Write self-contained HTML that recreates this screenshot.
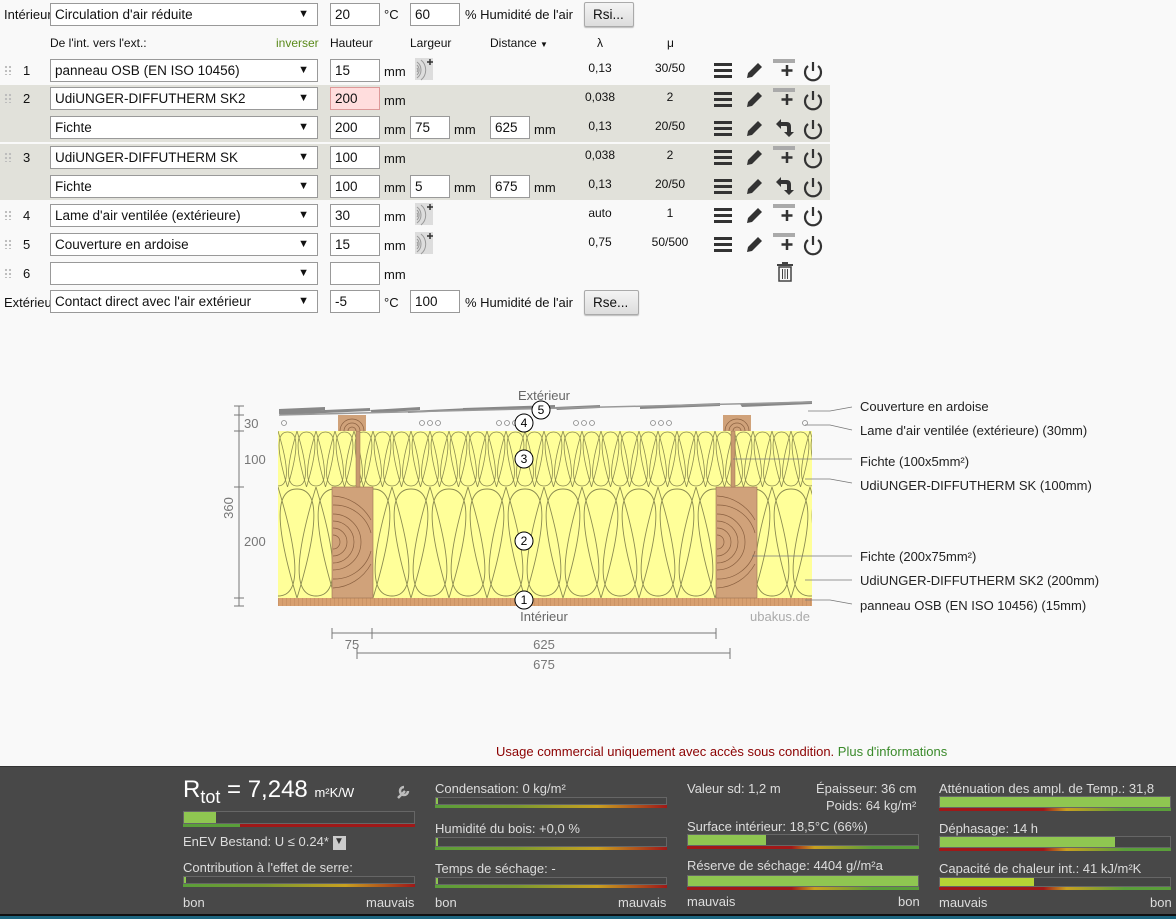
<!DOCTYPE html>
<html><head><meta charset="utf-8">
<style>
*{box-sizing:border-box;margin:0;padding:0}
body{width:1176px;height:919px;background:#f9f9f9;font-family:"Liberation Sans",Arial,sans-serif;font-size:13px;color:#111;position:relative;overflow:hidden}
.a{position:absolute;white-space:nowrap}
.sel{position:absolute;left:50px;width:268px;height:23px;border:1px solid #999;background:#fff;padding:3px 4px;font-size:13.5px}
.sel:after{content:"▼";position:absolute;right:8px;top:4px;font-size:11px}
.in{position:absolute;height:23px;border:1px solid #999;background:#fff;padding:3px 4px;font-size:13.5px}
.sh{position:absolute;left:0;width:830px;background:#e1e1da}
.btn{position:absolute;height:25px;border:1px solid #aaa;border-radius:2px;background:linear-gradient(#f4f4f4,#ddd);padding:4px 8px;font-size:13.5px;box-shadow:0 1px 1px #bbb}
.c{text-align:center;width:50px;font-size:12px}
.grip{position:absolute;left:4px;width:8px;height:10px;background-image:radial-gradient(#bbb 1px,transparent 1.3px);background-size:4px 4px}
.pn{background:#484848;position:absolute;left:0;top:766px;width:1176px;height:148px;border-top:1px solid #333;color:#eee;font-size:13px}
.trk{position:absolute;height:10px;background:#444;border:1px solid #666}
.fill{position:absolute;left:0;top:0;bottom:0;background:#8fc651}
.gl{position:absolute;height:3px}
.g1{background:linear-gradient(90deg,#5a9e3a 0%,#7a9a30 35%,#c8a020 70%,#a01818 100%)}
.g2{background:linear-gradient(90deg,#a01818 0%,#a01818 45%,#c8a020 55%,#5a9e3a 80%)}
.lbl{position:absolute;color:#ddd;white-space:nowrap}
</style></head><body>

<div class="sh" style="top:85px;height:57px"></div>
<div class="sh" style="top:144px;height:56px"></div>

<div class="a" style="left:4px;top:7px">Intérieur</div>
<div class="sel" style="top:3px">Circulation d'air réduite</div>
<div class="in" style="left:330px;top:3px;width:50px">20</div>
<div class="a" style="left:384px;top:7px">°C</div>
<div class="in" style="left:410px;top:3px;width:50px">60</div>
<div class="a" style="left:465px;top:7px">% Humidité de l'air</div>
<div class="btn" style="left:584px;top:2px;width:50px">Rsi...</div>

<div class="a" style="left:50px;top:36px;font-size:12px">De l'int. vers l'ext.:</div>
<div class="a" style="left:276px;top:36px;font-size:12px;color:#5a8a1a">inverser</div>
<div class="a" style="left:330px;top:36px;font-size:12px">Hauteur</div>
<div class="a" style="left:410px;top:36px;font-size:12px">Largeur</div>
<div class="a" style="left:490px;top:36px;font-size:12px">Distance <span style="font-size:8px">▼</span></div>
<div class="a" style="left:597px;top:36px;font-size:12px">λ</div>
<div class="a" style="left:667px;top:36px;font-size:12px">μ</div>

<svg width="0" height="0" style="position:absolute">
<defs>
<g id="ham"><rect x="0" y="0" width="18" height="3" fill="#333"/><rect x="0" y="6" width="18" height="3" fill="#333"/><rect x="0" y="12" width="18" height="3" fill="#333"/></g>
<g id="pen"><path d="M3 17 L4 12 L14 2 L18 6 L8 16 Z" fill="#333"/></g>
<g id="add"><rect x="0" y="0" width="22" height="4" fill="#aaa"/><path d="M14 6 V17 M8.5 11.5 H19.5" stroke="#333" stroke-width="2.5"/></g>
<g id="pow"><path d="M5 5 A8 8 0 1 0 15 5" fill="none" stroke="#333" stroke-width="2.2"/><path d="M10 1 V10" stroke="#333" stroke-width="2.2"/></g>
<g id="undo"><path d="M1 6 L6 1 L6 4 L12 4 Q16 4 16 9 L16 14 L19 14 L14 19 L9 14 L12 14 L12 9 Q12 8 11 8 L6 8 L6 11 Z" fill="#333"/></g>
<g id="rad"><rect x="0" y="0" width="18" height="22" fill="#ddd"/><path d="M2 4 A10 10 0 0 1 2 20 M2 7 A7 7 0 0 1 2 17 M2 10 A3 3 0 0 1 2 14 M6 2 A13 13 0 0 1 6 22" fill="none" stroke="#999" stroke-width="1"/><path d="M15 1 V7 M12 4 H18" stroke="#333" stroke-width="1.5"/></g>
</defs>
</svg>

<div class="grip" style="top:65px"></div><div class="a" style="left:23px;top:63px">1</div>
<div class="sel" style="top:59px">panneau OSB (EN ISO 10456)</div>
<div class="in" style="left:330px;top:59px;width:50px">15</div><div class="a" style="left:384px;top:64px">mm</div>
<svg class="a" style="left:415px;top:58px" width="20" height="24"><use href="#rad"/></svg>
<div class="a c" style="left:575px;top:61px">0,13</div><div class="a c" style="left:645px;top:61px">30/50</div>

<div class="grip" style="top:93px"></div><div class="a" style="left:23px;top:91px">2</div>
<div class="sel" style="top:87px">UdiUNGER-DIFFUTHERM SK2</div>
<div class="in" style="left:330px;top:87px;width:50px;background:#fdd;border-color:#d99">200</div><div class="a" style="left:384px;top:93px">mm</div>
<div class="a c" style="left:575px;top:90px">0,038</div><div class="a c" style="left:645px;top:90px">2</div>

<div class="sel" style="top:116px">Fichte</div>
<div class="in" style="left:330px;top:116px;width:50px">200</div><div class="a" style="left:384px;top:122px">mm</div>
<div class="in" style="left:410px;top:116px;width:40px">75</div><div class="a" style="left:454px;top:122px">mm</div>
<div class="in" style="left:490px;top:116px;width:40px">625</div><div class="a" style="left:534px;top:122px">mm</div>
<div class="a c" style="left:575px;top:119px">0,13</div><div class="a c" style="left:645px;top:119px">20/50</div>

<div class="grip" style="top:152px"></div><div class="a" style="left:23px;top:150px">3</div>
<div class="sel" style="top:146px">UdiUNGER-DIFFUTHERM SK</div>
<div class="in" style="left:330px;top:146px;width:50px">100</div><div class="a" style="left:384px;top:151px">mm</div>
<div class="a c" style="left:575px;top:148px">0,038</div><div class="a c" style="left:645px;top:148px">2</div>

<div class="sel" style="top:175px">Fichte</div>
<div class="in" style="left:330px;top:175px;width:50px">100</div><div class="a" style="left:384px;top:180px">mm</div>
<div class="in" style="left:410px;top:175px;width:40px">5</div><div class="a" style="left:454px;top:180px">mm</div>
<div class="in" style="left:490px;top:175px;width:40px">675</div><div class="a" style="left:534px;top:180px">mm</div>
<div class="a c" style="left:575px;top:177px">0,13</div><div class="a c" style="left:645px;top:177px">20/50</div>

<div class="grip" style="top:210px"></div><div class="a" style="left:23px;top:208px">4</div>
<div class="sel" style="top:204px">Lame d'air ventilée (extérieure)</div>
<div class="in" style="left:330px;top:204px;width:50px">30</div><div class="a" style="left:384px;top:209px">mm</div>
<svg class="a" style="left:415px;top:203px" width="20" height="24"><use href="#rad"/></svg>
<div class="a c" style="left:575px;top:206px">auto</div><div class="a c" style="left:645px;top:206px">1</div>

<div class="grip" style="top:239px"></div><div class="a" style="left:23px;top:237px">5</div>
<div class="sel" style="top:233px">Couverture en ardoise</div>
<div class="in" style="left:330px;top:233px;width:50px">15</div><div class="a" style="left:384px;top:238px">mm</div>
<svg class="a" style="left:415px;top:232px" width="20" height="24"><use href="#rad"/></svg>
<div class="a c" style="left:575px;top:235px">0,75</div><div class="a c" style="left:645px;top:235px">50/500</div>

<div class="grip" style="top:268px"></div><div class="a" style="left:23px;top:266px">6</div>
<div class="sel" style="top:262px"></div>
<div class="in" style="left:330px;top:262px;width:50px"></div><div class="a" style="left:384px;top:267px">mm</div>
<svg class="a" style="left:777px;top:262px" width="16" height="20"><rect x="0" y="2" width="16" height="2" fill="#444"/><rect x="5" y="0" width="6" height="2" fill="#444"/><rect x="2" y="5" width="12" height="14" fill="none" stroke="#444" stroke-width="1.5"/><path d="M5.5 7 V17 M8 7 V17 M10.5 7 V17" stroke="#444"/></svg>

<div class="a" style="left:4px;top:295px;width:46px;overflow:hidden">Extérieur</div>
<div class="sel" style="top:290px">Contact direct avec l'air extérieur</div>
<div class="in" style="left:330px;top:290px;width:50px">-5</div>
<div class="a" style="left:384px;top:295px">°C</div>
<div class="in" style="left:410px;top:290px;width:50px">100</div>
<div class="a" style="left:465px;top:295px">% Humidité de l'air</div>
<div class="btn" style="left:584px;top:290px;width:55px">Rse...</div>

<svg class="a" style="left:700px;top:59px" width="130" height="200">
<g transform="translate(14,4)"><use href="#ham"/></g><g transform="translate(44,2)"><use href="#pen"/></g><g transform="translate(73,0)"><use href="#add"/></g><g transform="translate(103,2)"><use href="#pow"/></g>
<g transform="translate(14,33)"><use href="#ham"/></g><g transform="translate(44,31)"><use href="#pen"/></g><g transform="translate(73,29)"><use href="#add"/></g><g transform="translate(103,31)"><use href="#pow"/></g>
<g transform="translate(14,62)"><use href="#ham"/></g><g transform="translate(44,60)"><use href="#pen"/></g><g transform="translate(75,59)"><use href="#undo"/></g><g transform="translate(103,60)"><use href="#pow"/></g>
<g transform="translate(14,91)"><use href="#ham"/></g><g transform="translate(44,89)"><use href="#pen"/></g><g transform="translate(73,87)"><use href="#add"/></g><g transform="translate(103,89)"><use href="#pow"/></g>
<g transform="translate(14,120)"><use href="#ham"/></g><g transform="translate(44,118)"><use href="#pen"/></g><g transform="translate(75,117)"><use href="#undo"/></g><g transform="translate(103,118)"><use href="#pow"/></g>
<g transform="translate(14,149)"><use href="#ham"/></g><g transform="translate(44,147)"><use href="#pen"/></g><g transform="translate(73,145)"><use href="#add"/></g><g transform="translate(103,147)"><use href="#pow"/></g>
<g transform="translate(14,178)"><use href="#ham"/></g><g transform="translate(44,176)"><use href="#pen"/></g><g transform="translate(73,174)"><use href="#add"/></g><g transform="translate(103,176)"><use href="#pow"/></g>
</svg>

<svg class="a" style="left:0;top:380px" width="1176" height="300" font-family="Liberation Sans,Arial,sans-serif">
<defs>
<pattern id="p2" patternUnits="userSpaceOnUse" x="278" y="107" width="38" height="111">
<path d="M19 111 C-4 35 -3 2 19 2 C41 2 42 35 19 111 Z" fill="none" stroke="#8a8a50" stroke-width="0.9"/>
<path d="M0 0 C23 76 22 109 0 109 C-22 109 -23 76 0 0 M38 0 C61 76 60 109 38 109 C16 109 15 76 38 0" fill="none" stroke="#8a8a50" stroke-width="0.9"/>
</pattern>
<pattern id="p3" patternUnits="userSpaceOnUse" x="278" y="51" width="19" height="56">
<path d="M9.5 56 C-2 18 -1.5 1 9.5 1 C20.5 1 21 18 9.5 56" fill="none" stroke="#8a8a50" stroke-width="0.8"/>
<path d="M0 0 C11.5 38 11 55 0 55 C-11 55 -11.5 38 0 0 M19 0 C30.5 38 30 55 19 55 C8 55 7.5 38 19 0" fill="none" stroke="#8a8a50" stroke-width="0.8"/>
</pattern>
<pattern id="osb" patternUnits="userSpaceOnUse" x="278" y="218" width="4" height="8"><rect width="4" height="8" fill="#d8a070"/><path d="M0 0 V8" stroke="#b07a50" stroke-width="0.6"/></pattern>
<g id="wood"><rect x="0" y="0" width="41" height="111" fill="#d0a27a" stroke="#9a7050" stroke-width="0.6"/>
<g fill="none" stroke="#8a6040" stroke-width="0.7"><path d="M1 48 a7 7 0 0 1 0 14"/><path d="M1 41 a14 14 0 0 1 0 28"/><path d="M1 34 a21 21 0 0 1 0 42"/><path d="M1 27 a28 28 0 0 1 0 56"/><path d="M1 18 a38 38 0 0 1 38 28"/><path d="M1 92 a38 38 0 0 0 38 -28"/><path d="M1 9 a46 48 0 0 1 38 24"/><path d="M1 101 a46 48 0 0 0 38 -24"/></g></g>
<g id="bat"><rect x="0" y="0" width="28" height="16" fill="#d0a27a"/><g fill="none" stroke="#8a6040" stroke-width="0.7"><path d="M10 16 a4 4 0 0 1 8 0 M6 16 a8 8 0 0 1 16 0 M2 16 a12 12 0 0 1 24 0"/></g></g>
</defs>
<rect x="278" y="107" width="534" height="111" fill="#ffff99"/>
<rect x="278" y="107" width="534" height="111" fill="url(#p2)"/>
<rect x="278" y="51" width="534" height="56" fill="#ffff99"/>
<rect x="278" y="51" width="534" height="56" fill="url(#p3)"/>
<rect x="278" y="218" width="534" height="8" fill="url(#osb)"/>
<use href="#wood" x="332" y="107"/><use href="#wood" x="716" y="107"/>
<rect x="356" y="51" width="4" height="56" fill="#c89a70" stroke="#9a7050" stroke-width="0.5"/>
<rect x="731" y="51" width="4" height="56" fill="#c89a70" stroke="#9a7050" stroke-width="0.5"/>
<use href="#bat" x="338" y="35"/><use href="#bat" x="723" y="35"/>
<g fill="#888">
<polygon points="279,29 325,27 325,30 279,34"/><polygon points="280,32 370,28 370,31 280,35"/>
<polygon points="370,30 420,27 420,30 372,33"/><polygon points="408,31 470,28 470,30 408,33"/>
<polygon points="463,28 555,25 555,28 463,31"/><polygon points="555,27 600,25 600,28 557,30"/>
<polygon points="640,26 720,23 720,26 640,29"/><polygon points="740,24 812,21 812,24 742,27"/>
</g>
<path d="M279 35 L812 22" stroke="#999" stroke-width="1.5"/>
<g fill="none" stroke="#888" stroke-width="0.8">
<circle cx="284" cy="43" r="2.5"/><circle cx="422" cy="43" r="2.5"/><circle cx="430" cy="43" r="2.5"/><circle cx="438" cy="43" r="2.5"/>
<circle cx="499" cy="43" r="2.5"/><circle cx="507" cy="43" r="2.5"/><circle cx="515" cy="43" r="2.5"/>
<circle cx="576" cy="43" r="2.5"/><circle cx="584" cy="43" r="2.5"/><circle cx="592" cy="43" r="2.5"/>
<circle cx="653" cy="43" r="2.5"/><circle cx="661" cy="43" r="2.5"/><circle cx="669" cy="43" r="2.5"/>
<circle cx="805" cy="43" r="2.5"/></g>
<text x="544" y="20" text-anchor="middle" fill="#666" font-size="13">Extérieur</text>
<text x="544" y="241" text-anchor="middle" fill="#666" font-size="13">Intérieur</text>
<text x="810" y="241" text-anchor="end" fill="#aaa" font-size="13">ubakus.de</text>
<g font-size="12" text-anchor="middle" fill="#000">
<circle cx="541" cy="30" r="9" fill="#fff" stroke="#000"/><text x="541" y="34">5</text>
<circle cx="524" cy="43" r="9" fill="#fff" stroke="#000"/><text x="524" y="47">4</text>
<circle cx="524" cy="79" r="9" fill="#fff" stroke="#000"/><text x="524" y="83">3</text>
<circle cx="524" cy="161" r="9" fill="#fff" stroke="#000"/><text x="524" y="165">2</text>
<circle cx="524" cy="220" r="9" fill="#fff" stroke="#000"/><text x="524" y="224">1</text>
</g>
<g stroke="#777" stroke-width="1" fill="none">
<path d="M239 26 V226 M234 26 H244 M234 35 H244 M234 51 H244 M234 107 H244 M234 218 H244 M234 226 H244"/>
<path d="M332 248 V259 M372 248 V259 M716 248 V259 M332 253 H716 M357 268 V279 M730 268 V279 M357 273 H730"/>
</g>
<g fill="#777" font-size="13">
<text x="244" y="48">30</text><text x="244" y="84">100</text><text x="244" y="166">200</text>
<text transform="translate(233,128) rotate(-90)" text-anchor="middle">360</text>
<text x="352" y="269" text-anchor="middle">75</text><text x="544" y="269" text-anchor="middle">625</text><text x="544" y="289" text-anchor="middle">675</text>
</g>
<g stroke="#777" stroke-width="0.8" fill="none">
<path d="M808 31 H830 L852 27"/><path d="M805 45 H830 L852 50"/><path d="M733 79 H852"/><path d="M805 99 H830 L852 103"/>
<path d="M752 176 H852"/><path d="M805 200 H852"/><path d="M805 220 H830 L852 224"/>
</g>
<g fill="#222" font-size="13">
<text x="860" y="31">Couverture en ardoise</text>
<text x="860" y="55">Lame d'air ventilée (extérieure) (30mm)</text>
<text x="860" y="86">Fichte (100x5mm²)</text>
<text x="860" y="110">UdiUNGER-DIFFUTHERM SK (100mm)</text>
<text x="860" y="181">Fichte (200x75mm²)</text>
<text x="860" y="205">UdiUNGER-DIFFUTHERM SK2 (200mm)</text>
<text x="860" y="230">panneau OSB (EN ISO 10456) (15mm)</text>
</g>
</svg>

<div class="a" style="left:496px;top:744px;font-size:13px;color:#8b0000">Usage commercial uniquement avec accès sous condition. <span style="color:#3a8a2a">Plus d'informations</span></div>

<div class="pn">
<div class="lbl" style="left:183px;top:9px;font-size:24px;color:#fff">R<sub style="font-size:18px">tot</sub> = 7,248 <span style="font-size:13px">m²K/W</span></div>
<svg class="a" style="left:396px;top:16px" width="16" height="16"><path d="M2 15 L9 8 M8 4 A4 4 0 1 0 12 8" stroke="#bbb" stroke-width="2.5" fill="none"/></svg>
<div class="trk" style="left:183px;top:44px;width:232px;height:13px"><div class="fill" style="width:32px"></div></div>
<div class="gl" style="left:183px;top:57px;width:57px;background:#5a9e3a"></div><div class="gl" style="left:240px;top:57px;width:175px;background:#a01818"></div>
<div class="lbl" style="left:183px;top:67px">EnEV Bestand: U ≤ 0.24* <span style="display:inline-block;width:13px;height:14px;background:#ccc;color:#333;font-size:10px;text-align:center;vertical-align:middle">▼</span></div>
<div class="lbl" style="left:183px;top:93px">Contribution à l'effet de serre:</div>
<div class="trk" style="left:183px;top:109px;width:232px;height:8px"><div class="fill" style="width:2px"></div></div>
<div class="gl g1" style="left:183px;top:117px;width:232px"></div>
<div class="lbl" style="left:183px;top:128px">bon</div><div class="lbl" style="left:366px;top:128px">mauvais</div>

<div class="lbl" style="left:435px;top:14px">Condensation: 0 kg/m²</div>
<div class="trk" style="left:435px;top:30px;width:232px;height:8px"><div class="fill" style="width:2px"></div></div>
<div class="gl g1" style="left:435px;top:38px;width:232px"></div>
<div class="lbl" style="left:435px;top:54px">Humidité du bois: +0,0 %</div>
<div class="trk" style="left:435px;top:70px;width:232px;height:10px"><div class="fill" style="width:2px"></div></div>
<div class="gl g1" style="left:435px;top:80px;width:232px"></div>
<div class="lbl" style="left:435px;top:94px">Temps de séchage: -</div>
<div class="trk" style="left:435px;top:110px;width:232px;height:8px"><div class="fill" style="width:2px"></div></div>
<div class="gl g1" style="left:435px;top:118px;width:232px"></div>
<div class="lbl" style="left:435px;top:128px">bon</div><div class="lbl" style="left:618px;top:128px">mauvais</div>

<div class="lbl" style="left:687px;top:14px">Valeur sd: 1,2 m</div>
<div class="lbl" style="left:816px;top:14px">Épaisseur: 36 cm</div>
<div class="lbl" style="left:826px;top:31px">Poids: 64 kg/m²</div>
<div class="lbl" style="left:687px;top:52px">Surface intérieur: 18,5°C (66%)</div>
<div class="trk" style="left:687px;top:67px;width:232px;height:12px"><div class="fill" style="width:78px"></div></div>
<div class="gl g2" style="left:687px;top:79px;width:232px"></div>
<div class="lbl" style="left:687px;top:91px">Réserve de séchage: 4404 g//m²a</div>
<div class="trk" style="left:687px;top:108px;width:232px;height:12px"><div class="fill" style="width:230px"></div></div>
<div class="gl g2" style="left:687px;top:120px;width:232px"></div>
<div class="lbl" style="left:687px;top:127px">mauvais</div><div class="lbl" style="left:898px;top:127px">bon</div>

<div class="lbl" style="left:939px;top:14px">Atténuation des ampl. de Temp.: 31,8</div>
<div class="trk" style="left:939px;top:29px;width:232px;height:12px"><div class="fill" style="width:230px"></div></div>
<div class="gl g2" style="left:939px;top:41px;width:232px"></div>
<div class="lbl" style="left:939px;top:54px">Déphasage: 14 h</div>
<div class="trk" style="left:939px;top:69px;width:232px;height:12px"><div class="fill" style="width:175px"></div></div>
<div class="gl g2" style="left:939px;top:81px;width:232px"></div>
<div class="lbl" style="left:939px;top:94px">Capacité de chaleur int.: 41 kJ/m²K</div>
<div class="trk" style="left:939px;top:110px;width:232px;height:10px"><div class="fill" style="width:94px;background:#b6d335"></div></div>
<div class="gl g2" style="left:939px;top:120px;width:232px"></div>
<div class="lbl" style="left:939px;top:128px">mauvais</div><div class="lbl" style="left:1150px;top:128px">bon</div>
</div>
<div class="a" style="left:0;top:914px;width:1176px;height:2px;background:#111"></div>
<div class="a" style="left:0;top:916px;width:1176px;height:3px;background:#1d6680"></div>
</body></html>
